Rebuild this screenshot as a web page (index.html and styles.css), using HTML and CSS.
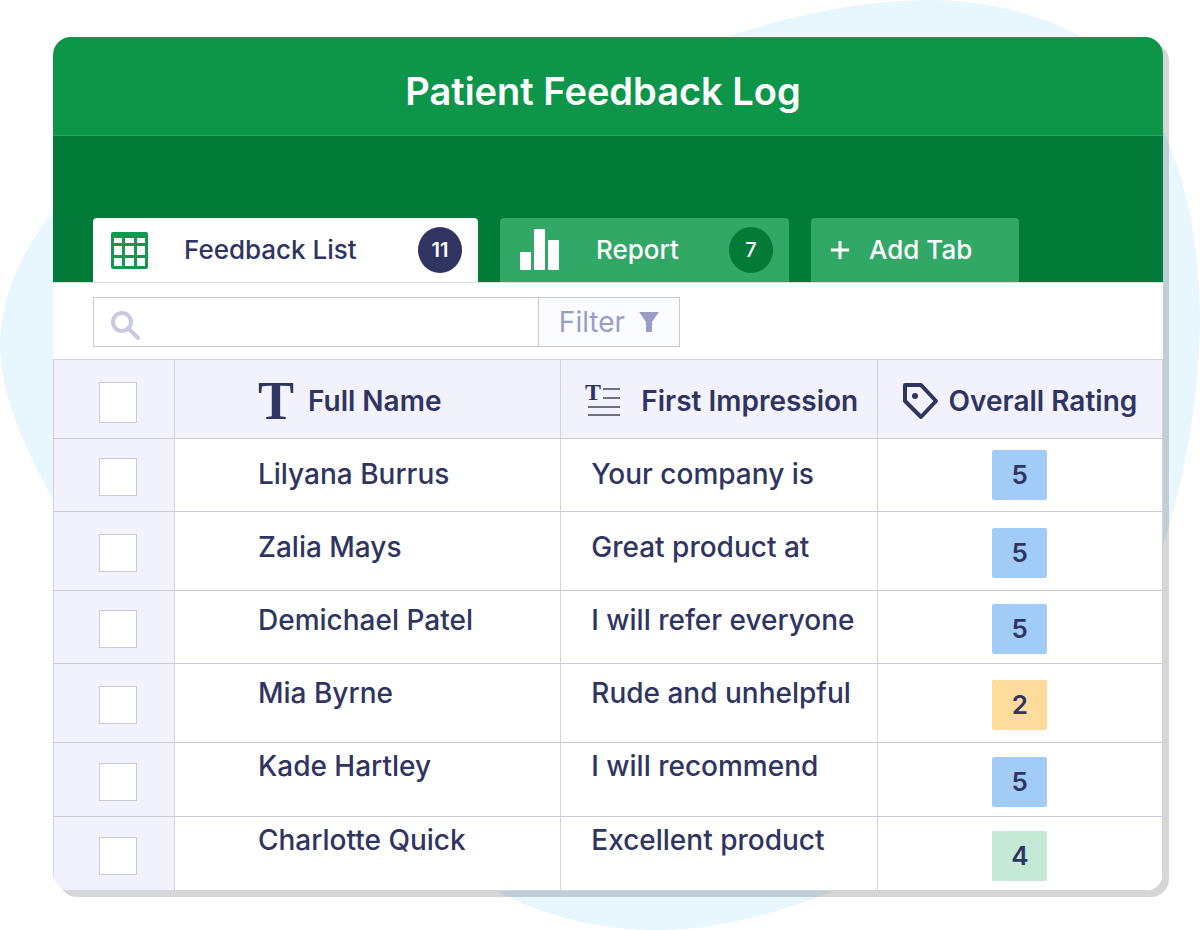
FILE: index.html
```html
<!DOCTYPE html>
<html lang="en">
<head>
<meta charset="UTF-8">
<meta name="viewport" content="width=device-width, initial-scale=1.0">
<title>Patient Feedback Log</title>
<link rel="stylesheet" href="styles.css">
</head>
<body>
<main class="page">
  <svg class="blob" viewBox="0 0 1200 930" preserveAspectRatio="none" aria-hidden="true">
    <path d="M930 0C985 0 1040 14 1082 37C1120 58 1146 95 1163 130C1188 184 1200 250 1200 322C1199 400 1184 482 1163 545C1110 710 960 850 828 893C780 912 720 930 660 930C600 930 550 918 500 893C330 810 140 660 53 500C25 448 0 395 0 345C0 300 22 249 53 212C180 110 500 95 725 37C790 16 860 0 930 0Z"/>
  </svg>

  <div class="card">
    <header class="card-header">
      <h1 class="title">Patient Feedback Log</h1>
    </header>

    <nav class="tabs" aria-label="Tabs">
      <button type="button" class="tab tab-list active">
        <svg width="37" height="37" viewBox="0 0 37 37" aria-hidden="true">
          <rect width="37" height="37" rx="2" fill="#179650"/>
          <g fill="#fff">
            <rect x="3" y="6" width="8" height="5"/>
            <rect x="14" y="6" width="9" height="5"/>
            <rect x="26" y="6" width="8" height="5"/>
            <rect x="3" y="14" width="8" height="9"/>
            <rect x="14" y="14" width="9" height="9"/>
            <rect x="26" y="14" width="8" height="9"/>
            <rect x="3" y="26" width="8" height="8"/>
            <rect x="14" y="26" width="9" height="8"/>
            <rect x="26" y="26" width="8" height="8"/>
          </g>
        </svg>
        <span>Feedback List</span>
        <span class="count">11</span>
      </button>
      <button type="button" class="tab tab-report">
        <svg width="40" height="44" viewBox="0 0 40 44" fill="#fff" aria-hidden="true">
          <rect y="24" width="11" height="18" rx="1"/>
          <rect x="14" y="1" width="11" height="41" rx="1"/>
          <rect x="28" y="12" width="11" height="30" rx="1"/>
        </svg>
        <span>Report</span>
        <span class="count">7</span>
      </button>
      <button type="button" class="tab tab-add">
        <svg width="18" height="18" viewBox="0 0 18 18" stroke="#fff" stroke-width="3" aria-hidden="true">
          <path d="M9 0V18M0 9H18"/>
        </svg>
        <span>Add Tab</span>
      </button>
    </nav>

    <div class="toolbar">
      <label class="search">
        <svg width="31" height="31" viewBox="0 0 31 31" fill="none" stroke="#c9cae0" stroke-width="4" aria-hidden="true">
          <circle cx="12" cy="13" r="9"/>
          <path d="M18 19L28 29" stroke-linecap="round"/>
        </svg>
        <input type="text" class="search-input" aria-label="Search">
      </label>
      <button type="button" class="filter">
        <span>Filter</span>
        <svg width="20" height="20" viewBox="0 0 20 20" fill="#999dc6" aria-hidden="true">
          <path d="M0 0H20L13 10V20H7V10Z"/>
        </svg>
      </button>
    </div>

    <table class="log">
      <colgroup>
        <col class="col-check">
        <col class="col-name">
        <col class="col-impression">
        <col class="col-rating">
      </colgroup>
      <thead>
        <tr>
          <th class="check"><input type="checkbox" aria-label="Select all"></th>
          <th class="name">
            <div class="heading">
              <svg width="36" height="60" viewBox="0 -11 36 60" aria-hidden="true"><text class="glyph" x="18" y="37" font-size="54">T</text></svg>
              <span>Full Name</span>
            </div>
          </th>
          <th class="impression">
            <div class="heading">
              <svg width="36" height="48" viewBox="0 -6 36 48" aria-hidden="true">
                <text class="glyph" x="8" y="17" font-size="24">T</text>
                <path d="M18 6H35M18 15H35M3 24H35M3 32H35" stroke="#6d7087" stroke-width="2"/>
              </svg>
              <span>First Impression</span>
            </div>
          </th>
          <th class="rating">
            <div class="heading">
              <svg width="36" height="37" viewBox="0 0 36 37" aria-hidden="true">
                <path d="M2 2H18L33 18L18 34L2 18Z" fill="none" stroke="#2f3560" stroke-width="4" stroke-linejoin="round"/>
                <circle cx="12" cy="13" r="3" fill="#2f3560"/>
              </svg>
              <span>Overall Rating</span>
            </div>
          </th>
        </tr>
      </thead>
      <tbody>
        <tr>
          <td class="check"><input type="checkbox" aria-label="Select Lilyana Burrus"></td>
          <td class="name">Lilyana Burrus</td>
          <td class="impression">Your company is</td>
          <td class="rating"><span class="score blue">5</span></td>
        </tr>
        <tr>
          <td class="check"><input type="checkbox" aria-label="Select Zalia Mays"></td>
          <td class="name">Zalia Mays</td>
          <td class="impression">Great product at</td>
          <td class="rating"><span class="score blue">5</span></td>
        </tr>
        <tr>
          <td class="check"><input type="checkbox" aria-label="Select Demichael Patel"></td>
          <td class="name">Demichael Patel</td>
          <td class="impression">I will refer everyone</td>
          <td class="rating"><span class="score blue">5</span></td>
        </tr>
        <tr>
          <td class="check"><input type="checkbox" aria-label="Select Mia Byrne"></td>
          <td class="name">Mia Byrne</td>
          <td class="impression">Rude and unhelpful</td>
          <td class="rating"><span class="score yellow">2</span></td>
        </tr>
        <tr>
          <td class="check"><input type="checkbox" aria-label="Select Kade Hartley"></td>
          <td class="name">Kade Hartley</td>
          <td class="impression">I will recommend</td>
          <td class="rating"><span class="score blue">5</span></td>
        </tr>
        <tr>
          <td class="check"><input type="checkbox" aria-label="Select Charlotte Quick"></td>
          <td class="name">Charlotte Quick</td>
          <td class="impression">Excellent product</td>
          <td class="rating"><span class="score green">4</span></td>
        </tr>
      </tbody>
    </table>
  </div>
</main>
</body>
</html>
```
FILE: styles.css
```css
* {
  box-sizing: border-box;
}

body {
  margin: 0;
  background-color: #fff;
  color: #2f3560;
  font-family: Inter, "Liberation Sans", sans-serif;
  font-size: 26px;
  font-weight: 500;
  line-height: 32px;
}

button,
input {
  font: inherit;
  color: inherit;
}

svg {
  display: block;
  flex: none;
}

.page {
  position: relative;
  padding: 37px 37px 39px 53px;
}

/* Pale shape behind the card */
.blob {
  position: absolute;
  inset: 0;
  width: 100%;
  height: 100%;
  fill: #e8f6fe;
}

.card {
  position: relative;
  overflow: hidden;
  background-color: #fff;
  border-radius: 18px;
  box-shadow: 6px 6px 0 rgba(0, 0, 0, .16);
}

.card-header {
  padding: 38px 20px 28px 10px;
  background-color: #0d964a;
  border-bottom: 1px solid #2ba363;
  text-align: center;
}

.title {
  margin: 0;
  color: #fff;
  font-size: 38px;
  font-weight: 600;
  line-height: 32px;
}

/* Tabs */
.tabs {
  display: flex;
  align-items: flex-end;
  gap: 22px;
  padding: 82px 40px 0;
  background-color: #027a38;
}

.tab {
  display: flex;
  align-items: center;
  gap: 36px;
  height: 64px;
  padding: 0 16px 0 20px;
  border: 0;
  border-radius: 4px 4px 0 0;
  background-color: #32a867;
  color: #fff;
  white-space: nowrap;
  cursor: pointer;
}

.tab.active {
  padding-left: 18px;
  background-color: #fff;
  color: #2f3560;
}

.tab-list {
  width: 385px;
}

.tab-report {
  width: 289px;
}

.tab-add {
  width: 208px;
  gap: 20px;
}

.count {
  display: flex;
  align-items: center;
  justify-content: center;
  width: 44px;
  height: 46px;
  margin-left: auto;
  border-radius: 50%;
  background-color: #027a38;
  font-size: 20px;
}

.active .count {
  background-color: #2f3560;
  color: #fff;
  font-weight: 600;
}

/* Search and filter */
.toolbar {
  display: flex;
  padding: 14px 40px 12px;
  border-top: 1px solid #d9dfe0;
}

.search {
  display: flex;
  align-items: center;
  flex: 0 1 446px;
  gap: 8px;
  min-width: 0;
  height: 50px;
  padding: 4px 16px 0;
  border: 1px solid #c8cad6;
}

.search-input {
  flex: 1;
  min-width: 0;
  border: 0;
  outline: 0;
  background: none;
}

.filter {
  display: flex;
  align-items: center;
  justify-content: center;
  gap: 14px;
  width: 141px;
  height: 50px;
  padding: 0;
  border: 1px solid #c8cad6;
  border-left: 0;
  background-color: #fafcff;
  color: #999dc6;
  font-size: 28px;
  font-weight: 400;
  cursor: pointer;
}

/* Feedback table */
.log {
  width: 100%;
  table-layout: fixed;
  border-collapse: separate;
  border-spacing: 0;
  font-size: 28px;
}

.col-check {
  width: 10.9%;
}

.col-name {
  width: 34.8%;
}

.col-impression {
  width: 28.5%;
}

th,
td {
  padding: 0;
  border-bottom: 1px solid #c9cbda;
  border-left: 1px solid #d3d4e2;
  text-align: left;
  white-space: nowrap;
}

th {
  height: 80px;
  padding-top: 4px;
  border-top: 1px solid #d3d4e2;
  background-color: #f2f2fc;
  font-weight: 600;
}

td {
  height: 73px;
  vertical-align: top;
}

tr > :last-child {
  border-right: 1px solid #d3d4e2;
}

tr:nth-child(even) td {
  height: 79px;
}

tr:nth-child(n + 5) td {
  height: 74px;
}

tr:last-child td {
  border-bottom-color: #d3d4e2;
}

.heading {
  display: flex;
  align-items: center;
}

.glyph {
  fill: #2f3560;
  font-family: "Liberation Serif", serif;
  font-weight: 700;
  text-anchor: middle;
}

.check {
  padding-left: 45px;
  background-color: #f2f2fc;
}

.check input {
  appearance: none;
  display: block;
  width: 38px;
  height: 38px;
  margin: 0;
  border: 1px solid #c9cbda;
  background-color: #fff;
}

th.check {
  padding-top: 6px;
}

th.check input {
  height: 41px;
}

td.check,
td.rating {
  padding-top: 4px;
  vertical-align: middle;
}

.name {
  padding-left: 83px;
}

.name .heading {
  gap: 14px;
}

.impression {
  padding-left: 24px;
}

.impression .heading {
  gap: 20px;
}

.rating {
  padding-left: 25px;
}

.rating .heading {
  gap: 10px;
}

td.name,
td.impression {
  padding-top: 19px;
}

td.impression {
  padding-left: 30px;
}

/* Text creeps up the row further down the list */
tr:nth-child(n + 3) .name,
tr:nth-child(n + 3) .impression {
  padding-top: 13px;
}

tr:nth-child(n + 5) .name,
tr:nth-child(n + 5) .impression {
  padding-top: 7px;
}

td.rating {
  padding-left: 0;
}

tr:first-child td.rating {
  padding-top: 0;
}

.score {
  display: flex;
  align-items: center;
  justify-content: center;
  width: 55px;
  height: 50px;
  margin: 0 auto;
  border-radius: 2px;
  font-size: 26px;
  font-weight: 600;
}

.blue {
  background-color: #a1ccf8;
}

.yellow {
  background-color: #ffdc9c;
}

.green {
  background-color: #c4e9d4;
}
```
